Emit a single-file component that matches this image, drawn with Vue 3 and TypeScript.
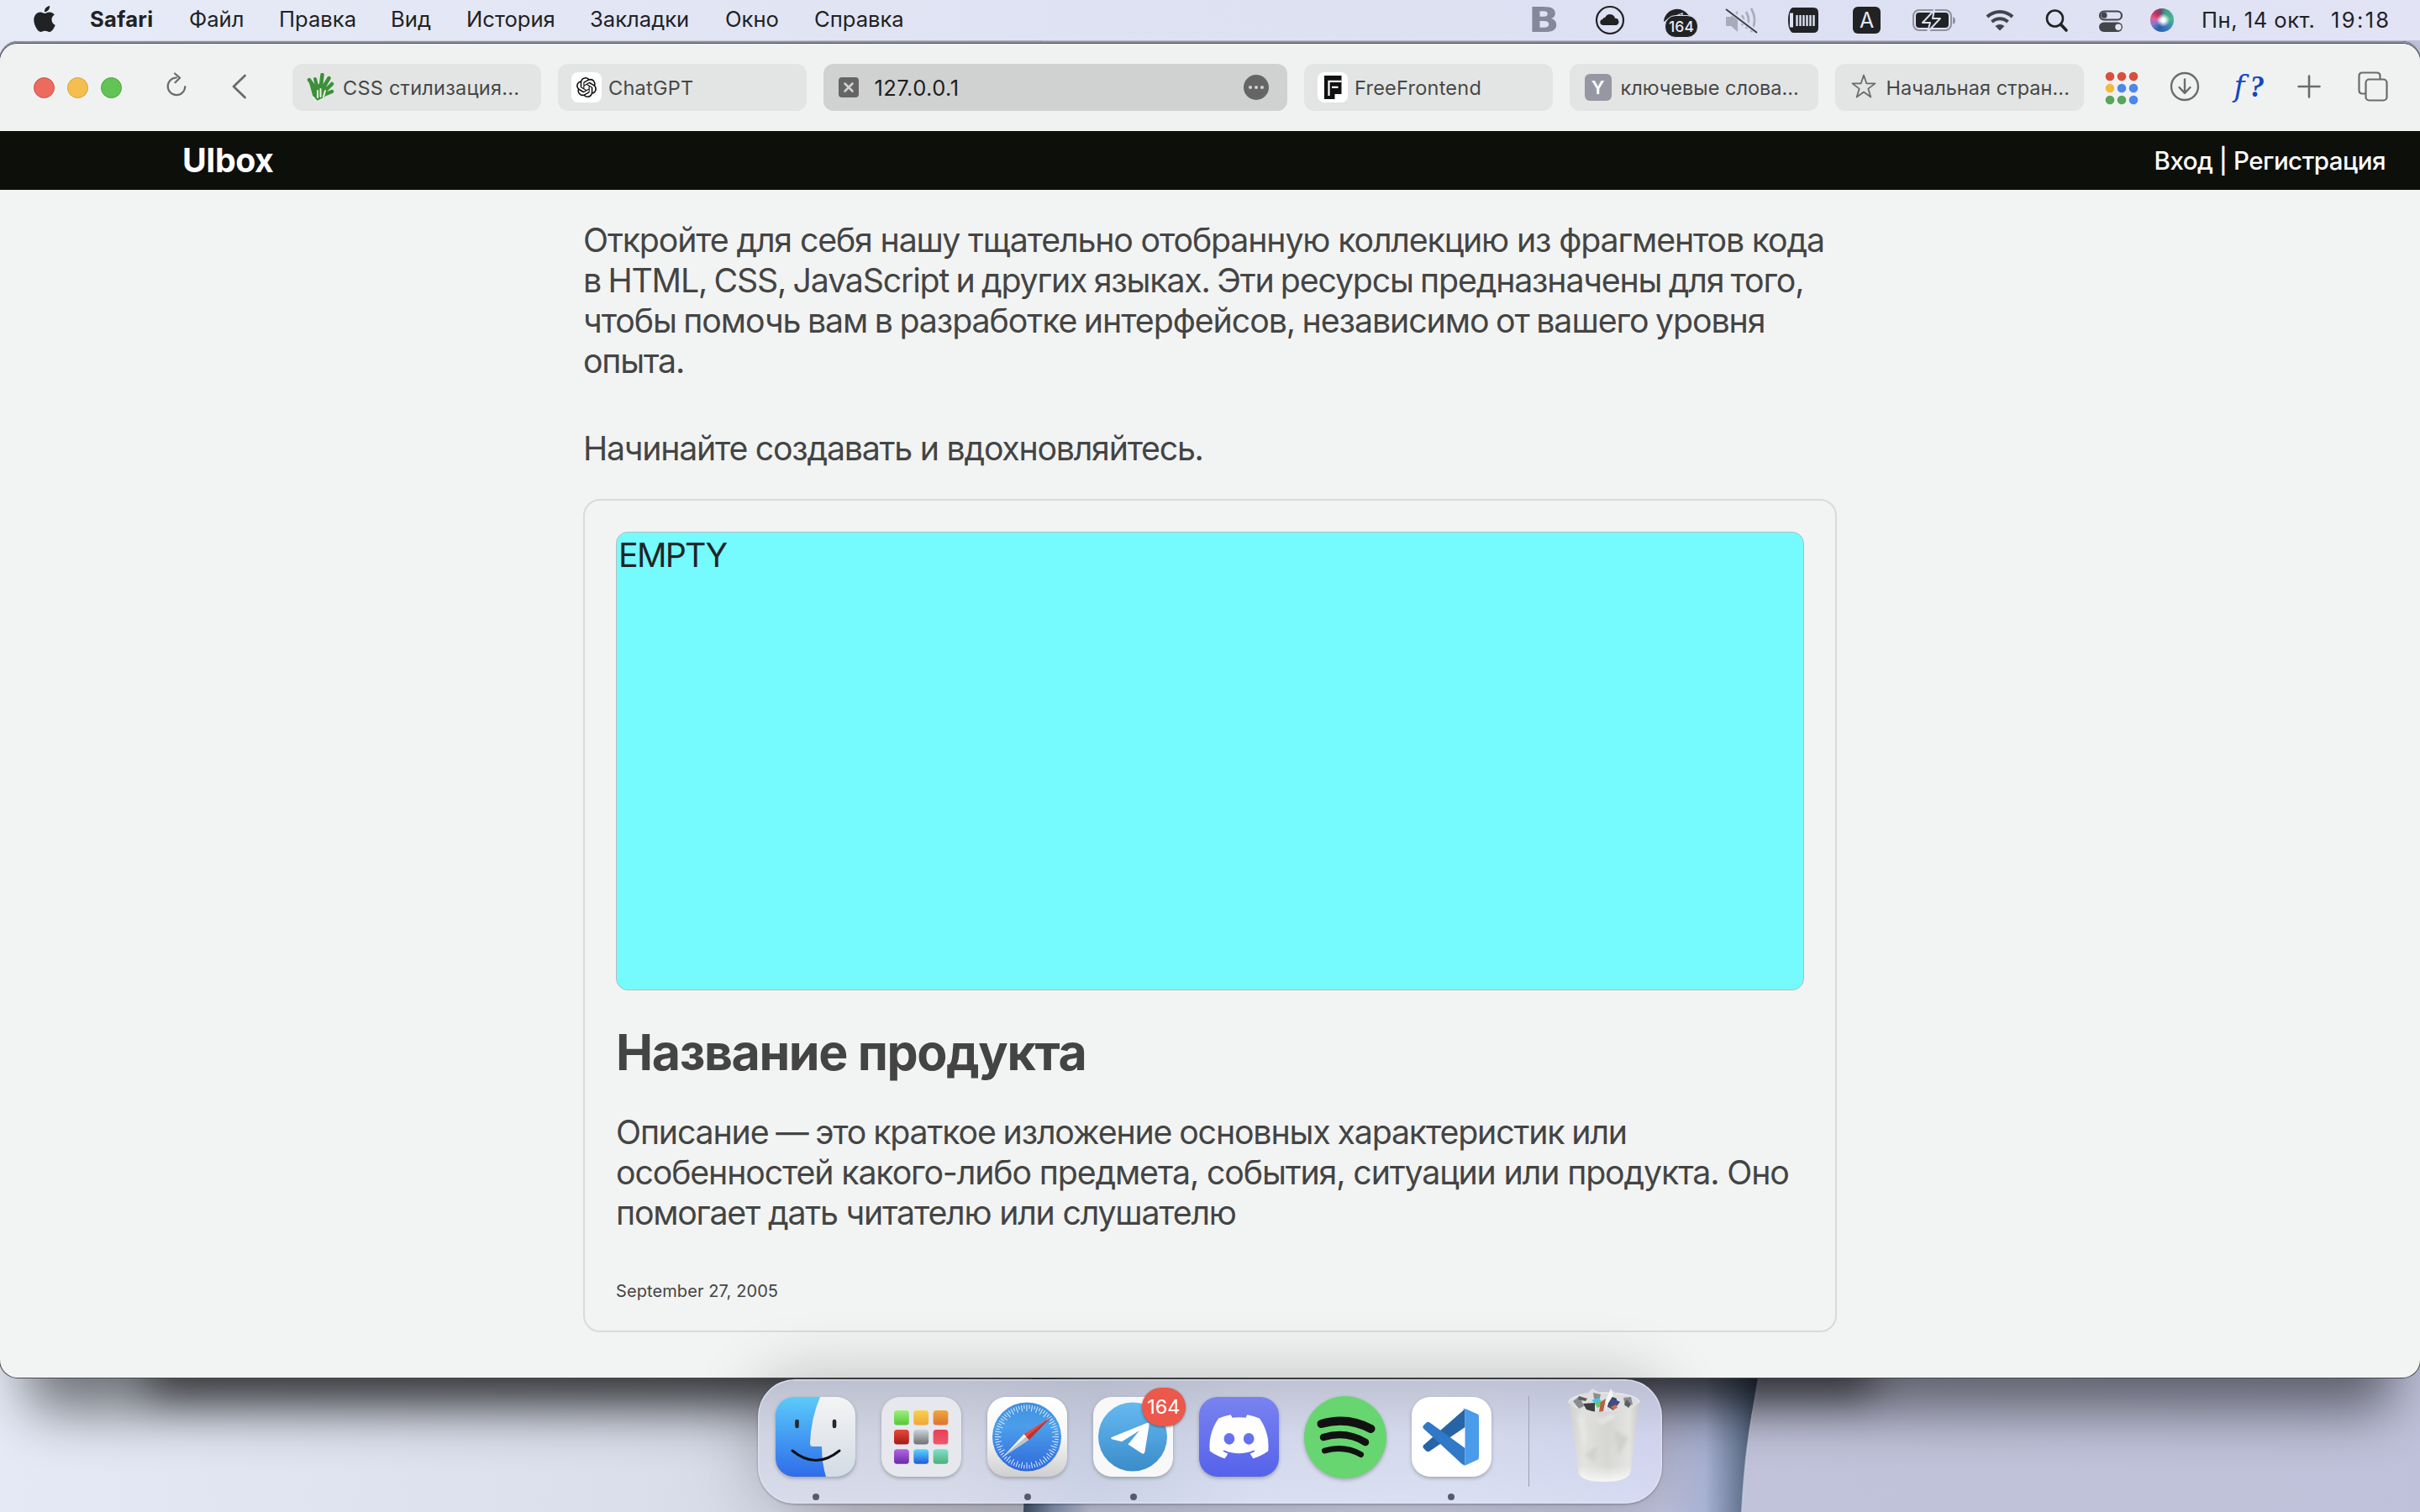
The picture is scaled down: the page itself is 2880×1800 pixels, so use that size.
<script setup lang="ts">
interface Tab {
  icon: 'hand' | 'gpt' | 'active' | 'free' | 'letter' | 'star'
  title: string
}

interface Line {
  text: string
  tracking: number
  word: number
}

const menus: string[] = ['Файл', 'Правка', 'Вид', 'История', 'Закладки', 'Окно', 'Справка']

const tabs: Tab[] = [
  { icon: 'hand', title: 'CSS стилизация...' },
  { icon: 'gpt', title: 'ChatGPT' },
  { icon: 'active', title: '127.0.0.1' },
  { icon: 'free', title: 'FreeFrontend' },
  { icon: 'letter', title: 'ключевые слова...' },
  { icon: 'star', title: 'Начальная стран...' },
]

const intro: Line[] = [
  { text: 'Откройте для себя нашу тщательно отобранную коллекцию из фрагментов кода', tracking: -1.15, word: 0 },
  { text: 'в HTML, CSS, JavaScript и других языках. Эти ресурсы предназначены для того,', tracking: -1.18, word: -1.5 },
  { text: 'чтобы помочь вам в разработке интерфейсов, независимо от вашего уровня', tracking: -1.06, word: -1.5 },
  { text: 'опыта.', tracking: -1.2, word: 0 },
]

const description: Line[] = [
  { text: 'Описание — это краткое изложение основных характеристик или', tracking: -1.16, word: -1 },
  { text: 'особенностей какого-либо предмета, события, ситуации или продукта. Оно', tracking: -1.14, word: 0 },
  { text: 'помогает дать читателю или слушателю', tracking: -1.22, word: 0 },
]

const gridDots: { x: number; y: number; color: string }[] = [
  '#d94f3d', '#d94f3d', '#d94f3d',
  '#f2b93b', '#4f86ec', '#4f86ec',
  '#58a55c', '#58a55c', '#4f86ec',
].map((color, i) => ({ x: 6 + (i % 3) * 14, y: 6 + Math.floor(i / 3) * 14, color }))

const launchpad: { x: number; y: number; from: string; to: string }[] = [
  ['#9cf07a', '#56c838'], ['#f8d24c', '#f0a636'], ['#f0a63c', '#dc7430'],
  ['#e8483a', '#a01c14'], ['#c8d4da', '#707070'], ['#e8405a', '#ec5a68'],
  ['#b464e4', '#6a2ca4'], ['#58d8fc', '#2458dc'], ['#80e0cc', '#4cb078'],
].map(([from, to], i) => ({ x: 15 + (i % 3) * 23.3, y: 16 + Math.floor(i / 3) * 23.1, from, to }))

const ticks: { angle: number; inner: number }[] = Array.from({ length: 72 }, (_, i) => ({
  angle: i * 5,
  inner: i % 2 ? 14 : 17,
}))

const lineStyle = (l: Line) => ({ letterSpacing: `${l.tracking}px`, wordSpacing: `${l.word}px` })
</script>

<template>
  <div class="desktop">
    <svg class="wallpaper" viewBox="0 0 2880 1800" preserveAspectRatio="none" aria-hidden="true">
      <defs>
        <linearGradient id="wpLeft" x1="0" x2="1">
          <stop offset="0" stop-color="#e4e9f5" />
          <stop offset=".6" stop-color="#dbdfec" />
          <stop offset=".74" stop-color="#d5d9e6" />
          <stop offset=".82" stop-color="#c3c3d0" />
          <stop offset="1" stop-color="#b8b9c7" />
        </linearGradient>
        <linearGradient id="wpMid" x1="0" x2="1">
          <stop offset="0" stop-color="#3e4d68" />
          <stop offset=".04" stop-color="#8491af" />
          <stop offset=".09" stop-color="#bcc0d5" />
          <stop offset=".5" stop-color="#c8cce0" />
          <stop offset=".86" stop-color="#bfc1dc" />
          <stop offset=".92" stop-color="#a9b3d4" />
          <stop offset=".97" stop-color="#64748f" />
          <stop offset="1" stop-color="#35455f" />
        </linearGradient>
        <linearGradient id="wpRight" x1="0" x2="1">
          <stop offset="0" stop-color="#c8c8db" />
          <stop offset="1" stop-color="#bfc1da" />
        </linearGradient>
        <filter id="soft" x="-10%" y="-10%" width="120%" height="120%">
          <feGaussianBlur stdDeviation="32" />
        </filter>
        <filter id="softer" x="-10%" y="-10%" width="120%" height="120%">
          <feGaussianBlur stdDeviation="24" />
        </filter>
      </defs>
      <rect width="2880" height="1800" fill="url(#wpRight)" />
      <rect width="1240" height="1800" fill="url(#wpLeft)" />
      <path d="M1232 1600 Q1222 1700 1218 1800 H2073 Q2078 1700 2100 1600 Z" fill="url(#wpMid)" />
      <path d="M2073 1800 Q2078 1700 2096 1640" fill="none" stroke="#c5d0e4" stroke-width="2" opacity=".7" />
      <rect x="30" y="90" width="2820" height="1590" rx="30" fill="#000" opacity=".5" filter="url(#soft)" />
      <rect x="178" y="90" width="2050" height="1572" fill="#000" opacity=".5" filter="url(#softer)" />
    </svg>

    <header class="menubar">
      <svg class="apple" viewBox="2 0 20 24" preserveAspectRatio="none"><path fill="#202224" d="M12.152 6.896c-.948 0-2.415-1.078-3.96-1.04-2.04.027-3.91 1.183-4.961 3.014-2.117 3.675-.546 9.103 1.519 12.09 1.013 1.454 2.208 3.09 3.792 3.039 1.52-.065 2.09-.987 3.935-.987 1.831 0 2.35.987 3.96.948 1.637-.026 2.676-1.48 3.676-2.948 1.156-1.688 1.636-3.325 1.662-3.415-.039-.013-3.182-1.221-3.22-4.857-.026-3.04 2.48-4.494 2.597-4.559-1.429-2.09-3.623-2.324-4.39-2.376-2-.156-3.675 1.09-4.61 1.09zM15.53 3.83c.843-1.012 1.4-2.427 1.245-3.83-1.207.052-2.662.805-3.532 1.818-.78.896-1.454 2.338-1.273 3.714 1.338.104 2.715-.688 3.559-1.701" /></svg>
      <nav class="menus">
        <strong>Safari</strong>
        <span v-for="m in menus" :key="m">{{ m }}</span>
      </nav>
      <div class="status">
        <span class="status-b">B</span>
        <svg width="36" height="40" viewBox="0 0 36 40"><circle cx="18" cy="20" r="16" fill="none" stroke="#202224" stroke-width="2.2" /><path fill="#202224" d="M9.5 26a3.6 3.6 0 0 1-.4-7.100c.8-1.500 2-2.200 3.200-2.200a6.200 6.200 0 0 1 11.700 1.100 4.200 4.200 0 0 1 1.500 8.200z" /></svg>
        <span class="tg-status">
          <svg width="34" height="24" viewBox="0 0 34 24"><path fill="#202224" d="M0 22a16 15.500 0 0 1 31-5c-3-2-18-2-24 0-3 1-5 4-7 5z" /><path d="M14 15l8-3v2" stroke="#dde0f2" stroke-width="1.300" fill="none" /></svg>
          <b>164</b>
        </span>
        <svg width="40" height="40" viewBox="0 0 40 40"><path d="M1 16h6l8-7v25l-8-7H1z" fill="#a9abba" /><path d="M20 14q4 6 0 12M25 10q6 10 0 20M31 6q8 14 0 28" stroke="#a9abba" stroke-width="2.600" fill="none" /><path d="M1 6l37 28" stroke="#dde0f2" stroke-width="5" /><path d="M1 7l37 28" stroke="#3b3d44" stroke-width="2" /></svg>
        <svg width="37" height="40" viewBox="0 0 37 40"><path d="M7 5h24q6 0 6 6v18q0 6-6 6H7q-2 0-3-2-3-4-3-13T4 7q1-2 3-2z" fill="#202224" /><path d="M5 11.500v17" stroke="#dde0f2" stroke-width="4" /><path d="M11.500 14v13M15.500 14v13M19.500 14v13M23.500 14v13M27.500 14v13M31.500 14v13" stroke="#dde0f2" stroke-width="2.400" /></svg>
        <span class="lang">A</span>
        <svg width="54" height="40" viewBox="0 0 54 40"><rect x="2" y="8" width="45" height="24" rx="7" fill="none" stroke="#8f91a0" stroke-width="2" /><rect x="5" y="11" width="39" height="18" rx="4" fill="#202224" /><path d="M49 16q3 1 3 4.500T49 25z" fill="#8f91a0" /><path d="M27 8L13 23h9l-3 11 15-16h-9z" fill="#202224" stroke="#dde0f2" stroke-width="2" stroke-linejoin="round" /></svg>
        <svg width="34" height="40" viewBox="0 0 34 40"><path d="M2 16a21.500 21.500 0 0 1 30 0M7.500 22a14 14 0 0 1 19 0" stroke="#43444c" stroke-width="4" fill="none" /><path d="M11.500 27q5.500-4 11 0L17 32.500z" fill="#43444c" /></svg>
        <svg width="28" height="40" viewBox="0 0 28 40"><circle cx="11.500" cy="18" r="9.500" fill="none" stroke="#202224" stroke-width="2.600" /><path d="M18.500 25l6.500 7" stroke="#202224" stroke-width="3.600" stroke-linecap="round" /></svg>
        <svg width="30" height="40" viewBox="0 0 30 40"><rect x="2" y="9.500" width="26" height="10" rx="5" fill="none" stroke="#43444c" stroke-width="2.200" /><circle cx="7" cy="14.200" r="3.600" fill="#43444c" /><rect x="1" y="22.500" width="28" height="11.500" rx="5.700" fill="#43444c" /><circle cx="24" cy="28.200" r="3.700" fill="#e2e5f4" /></svg>
        <i class="siri"></i>
        <span class="clock"><span class="date">Пн, 14 окт.</span><span class="time">19:18</span></span>
      </div>
    </header>

    <section class="window">
      <div class="toolbar">
        <div class="lights"><i class="red"></i><i class="yellow"></i><i class="green"></i></div>
        <svg class="reload" width="26" height="32" viewBox="0 0 26 32"><path d="M13 6.500a10.300 10.300 0 1 0 10.300 10.500M11 1.500l6 5.200-5.500 5.500" fill="none" stroke="#6a6b6a" stroke-width="2.200" stroke-linecap="round" stroke-linejoin="round" /></svg>
        <svg class="back" width="20" height="32" viewBox="0 0 20 32"><path d="M16.500 3L3 16l13.500 13" fill="none" stroke="#6a6b6a" stroke-width="2.800" stroke-linecap="round" stroke-linejoin="round" /></svg>

        <div class="tabs">
          <div v-for="t in tabs" :key="t.title" class="tab" :class="t.icon">
            <svg v-if="t.icon === 'hand'" class="fav" width="34" height="34" viewBox="0 0 34 34">
              <g stroke="#3d9038" stroke-linecap="round" fill="none">
                <path d="M10 18L3 8" stroke-width="4.500" /><path d="M12 15L10 7" stroke-width="4" /><path d="M17 15l1.500-13" stroke-width="4.500" /><path d="M20 17l6.500-11" stroke-width="4.500" /><path d="M22 21l8-8" stroke-width="4.500" /><path d="M20 26l10-4" stroke-width="4.500" />
              </g>
              <path d="M2 8l6 22 4 3 10-5 4-10-8-6-7 2z" fill="#3d9038" />
              <path d="M13 29v-8M16.500 28v-9M20 28l2-7" stroke="#e8f2e6" stroke-width="2" stroke-linecap="round" />
              <path d="M7 28l5 6" stroke="#e8f2e6" stroke-width="2" />
            </svg>
            <span v-else-if="t.icon === 'gpt'" class="fav tile">
              <svg width="24" height="24" viewBox="0 0 24 24"><path fill="#111" d="M22.2819 9.8211a5.9847 5.9847 0 0 0-.5157-4.9108 6.0462 6.0462 0 0 0-6.5098-2.9A6.0651 6.0651 0 0 0 4.9807 4.1818a5.9847 5.9847 0 0 0-3.9977 2.9 6.0462 6.0462 0 0 0 .7427 7.0966 5.98 5.98 0 0 0 .511 4.9107 6.051 6.051 0 0 0 6.5146 2.9001A5.9847 5.9847 0 0 0 13.2599 24a6.0557 6.0557 0 0 0 5.7718-4.2058 5.9894 5.9894 0 0 0 3.9977-2.9001 6.0557 6.0557 0 0 0-.7475-7.0729zm-9.022 12.6081a4.4755 4.4755 0 0 1-2.8764-1.0408l.1419-.0804 4.7783-2.7582a.7948.7948 0 0 0 .3927-.6813v-6.7369l2.02 1.1686a.071.071 0 0 1 .038.052v5.5826a4.504 4.504 0 0 1-4.4945 4.4944zm-9.6607-4.1254a4.4708 4.4708 0 0 1-.5346-3.0137l.142.0852 4.783 2.7582a.7712.7712 0 0 0 .7806 0l5.8428-3.3685v2.3324a.0804.0804 0 0 1-.0332.0615L9.74 19.9502a4.4992 4.4992 0 0 1-6.1408-1.6464zM2.3408 7.8956a4.485 4.485 0 0 1 2.3655-1.9728V11.6a.7664.7664 0 0 0 .3879.6765l5.8144 3.3543-2.0201 1.1685a.0757.0757 0 0 1-.071 0l-4.8303-2.7865A4.504 4.504 0 0 1 2.3408 7.872zm16.5963 3.8558L13.1038 8.364 15.1192 7.2a.0757.0757 0 0 1 .071 0l4.8303 2.7913a4.4944 4.4944 0 0 1-.6765 8.1042v-5.6772a.79.79 0 0 0-.407-.667zm2.0107-3.0231l-.142-.0852-4.7735-2.7818a.7759.7759 0 0 0-.7854 0L9.409 9.2297V6.8974a.0662.0662 0 0 1 .0284-.0615l4.8303-2.7866a4.4992 4.4992 0 0 1 6.6802 4.66zM8.3065 12.863l-2.02-1.1638a.0804.0804 0 0 1-.038-.0567V6.0742a4.4992 4.4992 0 0 1 7.3757-3.4537l-.142.0805L8.704 5.459a.7948.7948 0 0 0-.3927.6813zm1.0976-2.3654l2.602-1.4998 2.6069 1.4998v2.9994l-2.5974 1.4997-2.6067-1.4997Z" /></svg>
            </span>
            <svg v-else-if="t.icon === 'active'" class="fav" width="24" height="24" viewBox="0 0 24 24"><rect width="24" height="24" rx="4" fill="#646564" /><path d="M7.500 7.500l9 9M16.500 7.500l-9 9" stroke="#d0d2d1" stroke-width="2.600" stroke-linecap="round" /></svg>
            <span v-else-if="t.icon === 'free'" class="fav tile">
              <svg width="36" height="36" viewBox="0 0 36 36"><path d="M8 4H28.500V26H20.500V32H8z" fill="#111" /><path d="M13.500 28V10.800H28.500M17 17.800H24.500" fill="none" stroke="#fff" stroke-width="2.200" /></svg>
            </span>
            <span v-else-if="t.icon === 'letter'" class="fav letter-box">Y</span>
            <svg v-else class="fav" width="30" height="30" viewBox="0 0 30 30"><path d="M15 1.500l3.300 9.800 10.200.1-8.200 6.200 3 10L15 21.600l-8.300 6 3-10-8.200-6.200 10.200-.1z" fill="none" stroke="#6a6b6a" stroke-width="1.800" stroke-linejoin="round" /></svg>
            <span class="tab-title">{{ t.title }}</span>
            <svg v-if="t.icon === 'active'" class="more" width="30" height="30" viewBox="0 0 30 30"><circle cx="15" cy="15" r="15" fill="#646564" /><circle cx="8" cy="15" r="2.100" fill="#d0d2d1" /><circle cx="15" cy="15" r="2.100" fill="#d0d2d1" /><circle cx="22" cy="15" r="2.100" fill="#d0d2d1" /></svg>
          </div>
        </div>

        <div class="actions">
          <svg width="40" height="40" viewBox="0 0 40 40"><circle v-for="(d, i) in gridDots" :key="i" :cx="d.x" :cy="d.y" r="5.300" :fill="d.color" /></svg>
          <svg width="36" height="36" viewBox="0 0 36 36"><circle cx="18" cy="18" r="16" fill="none" stroke="#6a6b6a" stroke-width="2.400" /><path d="M18 9.500v16M11.500 19l6.500 6.800 6.500-6.800" fill="none" stroke="#6a6b6a" stroke-width="2.400" stroke-linecap="round" stroke-linejoin="round" /></svg>
          <span class="fq"><i>f</i><b>?</b></span>
          <svg width="28" height="28" viewBox="0 0 28 28"><path d="M14 1.500v25M1.500 14h25" stroke="#6a6b6a" stroke-width="2.600" stroke-linecap="round" /></svg>
          <svg width="36" height="36" viewBox="0 0 36 36"><path d="M9.500 26.500H5.500q-4 0-4-4v-17q0-4 4-4H22.500q4 0 4 4V9" fill="none" stroke="#6a6b6a" stroke-width="2.200" /><rect x="9.500" y="9.500" width="25" height="25" rx="4" fill="none" stroke="#6a6b6a" stroke-width="2.200" /></svg>
        </div>
      </div>

      <div class="site-header">
        <span class="brand">UIbox</span>
        <span class="auth">Вход | Регистрация</span>
      </div>

      <main class="page">
        <p class="intro"><span v-for="l in intro" :key="l.text" class="line" :style="lineStyle(l)">{{ l.text }}</span></p>
        <p class="intro second">Начинайте создавать и вдохновляйтесь.</p>
        <article class="card">
          <div class="preview">EMPTY</div>
          <h2>Название продукта</h2>
          <p class="desc"><span v-for="l in description" :key="l.text" class="line" :style="lineStyle(l)">{{ l.text }}</span></p>
          <time>September 27, 2005</time>
        </article>
      </main>
    </section>

    <footer class="dock">
      <div class="app running">
        <svg width="95" height="95" viewBox="0 0 95 95">
          <defs>
            <linearGradient id="fBlue" x2="0" y2="1"><stop stop-color="#5ccbf9" /><stop offset=".5" stop-color="#439bf3" /><stop offset="1" stop-color="#306ce9" /></linearGradient>
            <linearGradient id="fWhite" x2="0" y2="1"><stop stop-color="#f4f4f4" /><stop offset="1" stop-color="#d3dbe4" /></linearGradient>
            <clipPath id="sq"><rect width="95" height="95" rx="22" /></clipPath>
          </defs>
          <g clip-path="url(#sq)">
            <rect width="95" height="95" fill="url(#fBlue)" />
            <path d="M53 0Q42 26 41 55q0 4 3 4h11q0 20 5 36h35V0z" fill="url(#fWhite)" />
          </g>
          <path d="M25.500 29v6M70 29v6" stroke="#23282c" stroke-width="4.600" stroke-linecap="round" />
          <path d="M20 64q28 23 56 0" fill="none" stroke="#111" stroke-width="3" stroke-linecap="round" />
        </svg>
      </div>
      <div class="app">
        <svg width="95" height="95" viewBox="0 0 95 95">
          <defs><linearGradient v-for="(c, i) in launchpad" :id="'lp' + i" :key="i" x2="0" y2="1"><stop :stop-color="c.from" /><stop offset="1" :stop-color="c.to" /></linearGradient></defs>
          <rect width="95" height="95" rx="22" fill="#e7e8ee" />
          <rect v-for="(c, i) in launchpad" :key="i" :x="c.x" :y="c.y" width="17.800" height="17.500" rx="3.500" :fill="`url(#lp${i})`" />
        </svg>
      </div>
      <div class="app running">
        <svg width="95" height="95" viewBox="0 0 95 95">
          <defs>
            <linearGradient id="sfBg" x2="0" y2="1"><stop stop-color="#fff" /><stop offset=".5" stop-color="#f7f7f7" /><stop offset="1" stop-color="#cfcfcf" /></linearGradient>
            <linearGradient id="sfBlue" x2="0" y2="1"><stop stop-color="#3f8fde" /><stop offset=".35" stop-color="#4b9fea" /><stop offset="1" stop-color="#3068dc" /></linearGradient>
          </defs>
          <rect width="95" height="95" rx="22" fill="url(#sfBg)" />
          <circle cx="47" cy="47.500" r="41" fill="url(#sfBlue)" />
          <path v-for="t in ticks" :key="t.angle" :d="`M47 9.500V${t.inner}`" :transform="`rotate(${t.angle} 47 47.500)`" stroke="#cfe4fb" stroke-width="1.100" />
          <path d="M43.600 44.300L76 24 49.500 51.300z" fill="#e8493f" /><path d="M46.500 47.500L76 24 49.500 51.300z" fill="#b8352e" />
          <path d="M43.600 44.300L18 72l28.500-24.500z" fill="#f5f5f5" /><path d="M49.500 51.300L18 72l28.500-24.500z" fill="#c4c4c4" />
        </svg>
      </div>
      <div class="app running">
        <svg width="95" height="95" viewBox="0 0 95 95">
          <defs><linearGradient id="tgBlue" x2="0" y2="1"><stop stop-color="#65b9f0" /><stop offset="1" stop-color="#3b8cca" /></linearGradient></defs>
          <rect width="95" height="95" rx="22" fill="#f8f8f8" />
          <circle cx="47" cy="47.500" r="41" fill="url(#tgBlue)" />
          <path d="M22 48L64 31q3-1 2.500 3L61.500 65q-.5 4-4 2L41.500 56.500 55 40 34 53.300 23 50.500q-3-1-1-2.500z" fill="#fff" />
        </svg>
        <span class="badge">164</span>
      </div>
      <div class="app">
        <svg width="95" height="95" viewBox="0 0 95 95">
          <defs><linearGradient id="dcBg" x2="0" y2="1"><stop stop-color="#7983f0" /><stop offset="1" stop-color="#5562ea" /></linearGradient></defs>
          <rect width="95" height="95" rx="22" fill="url(#dcBg)" />
          <path transform="translate(12.500 13) scale(2.920 2.850)" fill="#fff" d="M20.317 4.3698a19.7913 19.7913 0 00-4.8851-1.5152.0741.0741 0 00-.0785.0371c-.211.3753-.4447.8648-.6083 1.2495-1.8447-.2762-3.68-.2762-5.4868 0-.1636-.3933-.4058-.8742-.6177-1.2495a.077.077 0 00-.0785-.037 19.7363 19.7363 0 00-4.8852 1.515.0699.0699 0 00-.0321.0277C.5334 9.0458-.319 13.5799.0992 18.0578a.0824.0824 0 00.0312.0561c2.0528 1.5076 4.0413 2.4228 5.9929 3.0294a.0777.0777 0 00.0842-.0276c.4616-.6304.8731-1.2952 1.226-1.9942a.076.076 0 00-.0416-.1057c-.6528-.2476-1.2743-.5495-1.8722-.8923a.077.077 0 01-.0076-.1277c.1258-.0943.2517-.1923.3718-.2914a.0743.0743 0 01.0776-.0105c3.9278 1.7933 8.18 1.7933 12.0614 0a.0739.0739 0 01.0785.0095c.1202.099.246.1981.3728.2924a.077.077 0 01-.0066.1276 12.2986 12.2986 0 01-1.873.8914.0766.0766 0 00-.0407.1067c.3604.698.7719 1.3628 1.225 1.9932a.076.076 0 00.0842.0286c1.961-.6067 3.9495-1.5219 6.0023-3.0294a.077.077 0 00.0313-.0552c.5004-5.177-.8382-9.6739-3.5485-13.6604a.061.061 0 00-.0312-.0286zM8.02 15.3312c-1.1825 0-2.1569-1.0857-2.1569-2.419 0-1.3332.9555-2.4189 2.157-2.4189 1.2108 0 2.1757 1.0952 2.1568 2.419 0 1.3332-.9555 2.4189-2.1569 2.4189zm7.9748 0c-1.1825 0-2.1569-1.0857-2.1569-2.419 0-1.3332.9554-2.4189 2.1569-2.4189 1.2108 0 2.1757 1.0952 2.1568 2.419 0 1.3332-.946 2.4189-2.1568 2.4189Z" />
        </svg>
      </div>
      <div class="app">
        <svg class="round" width="98" height="98" viewBox="0 0 98 98">
          <circle cx="49" cy="49" r="49" fill="#67d670" />
          <g fill="none" stroke="#111" stroke-linecap="round">
            <path d="M20.500 33q31-9 59 6" stroke-width="10" /><path d="M23 49q27-8 50 6" stroke-width="8.500" /><path d="M24.500 65q23-6.500 43 4.500" stroke-width="7" />
          </g>
        </svg>
      </div>
      <div class="app running">
        <svg width="95" height="95" viewBox="0 0 95 95">
          <rect width="95" height="95" rx="22" fill="#fff" />
          <path d="M63.500 14.300L14 57.500q-1.500 2 0 3.500l3.500 3.500q2 1.500 4 0L63.500 36z" fill="#2664a5" />
          <path d="M21.500 30.500q-2-1.500-4 0L14 34q-1.500 2 0 3.500L60 80q2 1.500 3.500 1V61z" fill="#3078c8" />
          <path d="M61 15q1-1.500 4-.5l13.500 6Q80 21.300 80 23v49.500q0 1.500-1.500 2.200L65 81q-2.500 1-4-.5 2.500.5 2.500-3V18q0-3-2.500-3z" fill="#4a9bea" />
        </svg>
      </div>
      <div class="divider"></div>
      <svg class="trash" width="86" height="112" viewBox="0 0 86 112">
        <defs>
          <linearGradient id="can" x2="1" y2="0"><stop stop-color="#cfcfcf" /><stop offset=".2" stop-color="#e0e0de" /><stop offset=".55" stop-color="#d3d3d0" /><stop offset=".85" stop-color="#e2e2e0" /><stop offset="1" stop-color="#c9c9c9" /></linearGradient>
          <linearGradient id="canBase" x2="0" y2="1"><stop stop-color="#fff" stop-opacity="0" /><stop offset=".8" stop-color="#fff" stop-opacity=".1" /><stop offset="1" stop-color="#fff" stop-opacity=".8" /></linearGradient>
          <filter id="blurCan"><feGaussianBlur stdDeviation="2" /></filter>
        </defs>
        <ellipse cx="43" cy="15" rx="42" ry="11" fill="#dcdce0" stroke="#f6f6f8" />
        <path d="M10 16L12 6l12-2 5-5 11 6 4 8 8-12 12 8 10 2 4 11-12 8H18z" fill="#dedede" />
        <path d="M6 14l8-6 5 12-6 3zM30 4l9 2-2 8-6-3zM66 10l9-1 2 9-9 2z" fill="#8b8c8f" />
        <path d="M13 8l10 3-2 3-9-2zM70 12l5 6-3 4-5-4z" fill="#5c5d61" />
        <path d="M18 17l14-1 0 11-10-3zM50 8l8 3-2 12-9-2z" fill="#403d42" />
        <path d="M28 13l8-3 4 4-6 4z" fill="#45c4e8" /><path d="M32 17l7-3 1 6-5 2z" fill="#69c56a" /><path d="M39 15l6-4-3 15-5 1z" fill="#b9603f" /><path d="M52 10l10 5-8 10-6-4z" fill="#3c4c8c" /><path d="M51 21l6-3 2 4-5 2z" fill="#dc6c36" />
        <path d="M45 13l6-14 3 8-7 11-2 8z" fill="#f6f6f6" />
        <path d="M1 15q8 12 42 12t42-12L75 96q-1 14-32 14T12 96z" fill="url(#can)" />
        <g filter="url(#blurCan)">
          <path d="M28 29l12 13 20-12-10 0-12 6zM12 32l7 36 3-10-4-26z" fill="#e6e6e4" />
          <path d="M54 48l18 10-12 22zM20 78l16-12-4 22z" fill="#cdcdc9" />
        </g>
        <path d="M1 15q8 12 42 12t42-12L75 96q-1 14-32 14T12 96z" fill="url(#canBase)" />
      </svg>
    </footer>
  </div>
</template>

<style>
body {
  margin: 0;
  overflow: hidden;
}
</style>

<style scoped>
.desktop {
  position: relative;
  width: 2880px;
  height: 1800px;
  display: flex;
  flex-direction: column;
  overflow: hidden;
  font-family: Inter, 'Noto Sans', sans-serif;
  -webkit-font-smoothing: antialiased;
}
svg {
  display: block;
  flex: none;
}
.wallpaper {
  position: absolute;
  inset: 0;
  width: 100%;
  height: 100%;
}
.menubar {
  position: relative;
  height: 48px;
  flex: none;
  display: flex;
  align-items: center;
  background: linear-gradient(90deg, #e7ebf7, #dfe2f2 45%, #dde0f2 75%, #e2e4f5);
  color: #202224;
  font-size: 25.6px;
}
.apple {
  width: 26px;
  height: 31px;
  margin: -4px 0 0 40px;
}
.menus {
  margin-left: 41px;
  display: grid;
  grid-template-columns: 118px 107px 133px 90px 147px 161px 106px 120px;
  white-space: nowrap;
  line-height: 48px;
  margin-top: -2px;
}
.menus strong {
  font-weight: 700;
  letter-spacing: .3px;
}
.status {
  margin-left: auto;
  width: 1058px;
  display: grid;
  grid-template-columns: 76px 82px 73px 74px 78px 70px 88px 71px 63px 62px 61px 1fr;
  align-items: center;
}
.status svg {
  margin-top: 0;
}
.status-b {
  width: 31px;
  font: 700 40px/48px 'DejaVu Sans', sans-serif;
  color: #85889a;
  margin-left: -3px;
  transform: scaleX(1.2);
  transform-origin: left;
}
.tg-status {
  position: relative;
  height: 40px;
}
.tg-status b {
  position: absolute;
  left: 1px;
  top: 14px;
  width: 40px;
  height: 27px;
  border-radius: 13px;
  border: 1px solid #dde0f2;
  box-sizing: border-box;
  background: #202224;
  color: #e9ebf6;
  font-size: 17.500px;
  font-weight: 500;
  line-height: 25px;
  text-align: center;
}
.lang {
  width: 33px;
  height: 32px;
  border-radius: 6px;
  background: #202224;
  color: #e4e7f6;
  text-align: center;
  font-size: 25px;
  line-height: 32px;
}
.siri {
  width: 28px;
  height: 28px;
  border-radius: 50%;
  background:
    radial-gradient(circle at 55% 50%, #fff 0 10%, rgba(255, 255, 255, 0) 38%),
    conic-gradient(from 20deg, #3f9c86, #4ab494, #3a78c0 35%, #2860a8 50%, #7a78d0 62%, #e060a0 72%, #c83060 82%, #6a4a70 92%, #3f9c86);
}
.clock {
  display: flex;
  justify-content: space-between;
  width: 225.500px;
  white-space: nowrap;
  margin-top: -2px;
}
.date { letter-spacing: .5px; }
.time { letter-spacing: 2.300px; }
.window {
  position: relative;
  flex: none;
  height: 1588px;
  margin-top: 4px;
  border-radius: 21px;
  background: #f2f4f3;
  box-shadow: 0 0 0 1px #4b4b4e, 0 -2px 0 1px #8f92a0, 0 -3px 0 0 #1b1d22;
  overflow: hidden;
}
.toolbar {
  height: 104px;
  display: flex;
  align-items: center;
  background: #f0f2f1;
}
.lights {
  display: flex;
  gap: 15px;
  margin-left: 39.500px;
}
.lights i {
  width: 25px;
  height: 25px;
  box-sizing: border-box;
  border-radius: 50%;
  border: 1px solid;
}
.red { background: #ed6a5e; border-color: #d15045 !important; }
.yellow { background: #f5bf4f; border-color: #d6a038 !important; }
.green { background: #61c454; border-color: #4ca43c !important; }
.reload {
  margin: -4px 0 0 52px;
}
.back {
  margin: -2px 0 0 52px;
}
.tabs {
  margin-left: 53px;
  width: 2132px;
  display: flex;
  gap: 20px;
}
.tab {
  width: 296px;
  height: 56px;
  box-sizing: border-box;
  padding-left: 16px;
  display: flex;
  align-items: center;
  border-radius: 12px;
  background: #e3e5e4;
  color: #464847;
  font-size: 23.500px;
  white-space: nowrap;
}
.fav {
  flex: none;
}
.hand { padding-left: 17px; }
.hand .tab-title { margin-left: 9.500px; letter-spacing: .25px; }
.tile {
  width: 36px;
  height: 36px;
  border-radius: 8px;
  background: #fff;
  display: flex;
  align-items: center;
  justify-content: center;
}
.gpt .tab-title, .free .tab-title { margin-left: 8.500px; letter-spacing: .25px; }
.tab.active {
  width: 552px;
  padding-left: 18px;
  padding-right: 22px;
  background: #d0d2d1;
  color: #1d1f1e;
  font-size: 25.500px;
}
.active .tab-title { margin: 1px 0 0 19px; letter-spacing: .45px; }
.more { margin-left: auto; }
.active .more { margin-top: -1px; }
.letter { padding-left: 18px; }
.letter .tab-title { margin-left: 11px; }
.letter-box {
  width: 32px;
  height: 32px;
  border-radius: 6px;
  background: #9797a3;
  color: #fff;
  font-size: 22px;
  font-weight: 600;
  line-height: 33px;
  text-align: center;
}
.star { padding-left: 19px; }
.star .fav { margin-top: -3px; }
.star .tab-title { margin-left: 12px; letter-spacing: .05px; }
.actions {
  margin-left: 25px;
  width: 337px;
  display: grid;
  grid-template-columns: 77px 75px 77px 72px 36px;
  align-items: center;
}
.actions svg { margin-top: -2px; }
.actions svg:first-child { margin-top: 2px; }
.fq {
  color: #1446c0;
  font-family: 'DejaVu Serif', serif;
  line-height: 36px;
  white-space: nowrap;
  display: flex;
}
.fq i {
  font-size: 35px;
  width: 19px;
  margin-left: 2px;
}
.fq b {
  font: italic 700 35px/38px 'Liberation Serif', serif;
}
.site-header {
  height: 70px;
  display: flex;
  justify-content: space-between;
  align-items: center;
  padding: 0 41px 2px 217px;
  box-sizing: border-box;
  background: #0d0f0a;
  color: #fff;
}
.brand {
  font-size: 39.300px;
  font-weight: 700;
  letter-spacing: -.45px;
}
.auth {
  margin-top: 2px;
  font-size: 29.500px;
  font-weight: 500;
  letter-spacing: -.5px;
}
.page {
  width: 1492px;
  margin: 0 auto;
  padding-top: 36px;
  color: #444;
}
.intro, .desc {
  margin: 0;
  font-size: 39.300px;
  line-height: 48px;
  letter-spacing: -1.250px;
  white-space: nowrap;
}
.line {
  display: block;
}
.intro.second {
  margin-top: 56px;
}
.card {
  margin-top: 36px;
  box-sizing: border-box;
  height: 992px;
  border: 2px solid #d9dbda;
  border-radius: 20px;
  padding: 37px;
}
.preview {
  box-sizing: border-box;
  height: 546px;
  border: 1px solid #b5bcbc;
  border-radius: 14px;
  background: #75fbfd;
  padding: 3px 2px;
  color: #212529;
  font-size: 39.300px;
  line-height: 48px;
  letter-spacing: -1.700px;
}
h2 {
  margin: 38px 0 0;
  font-size: 59px;
  font-weight: 700;
  line-height: 72px;
  letter-spacing: -1.350px;
}
.desc {
  margin-top: 35px;
}
time {
  display: block;
  margin-top: 57px;
  font-size: 20px;
  line-height: 24px;
  letter-spacing: .1px;
}
.dock {
  position: relative;
  box-sizing: border-box;
  width: 1076px;
  height: 148px;
  margin: 2px auto 0;
  padding: 0 26px 0 21px;
  display: flex;
  align-items: flex-start;
  border-radius: 44px;
  background:
    linear-gradient(180deg, rgba(178, 182, 196, .65), rgba(205, 210, 225, .3) 45%, rgba(225, 231, 247, .4)),
    linear-gradient(90deg, #d2d4e2, #d0d3e2 22%, #c0c7de 38%, #d4d9ee 55%, #d6dbf0 75%, #cfd2f0);
  box-shadow: 0 0 80px rgba(0, 0, 0, .24), inset 0 0 0 1.500px rgba(225, 230, 245, .7), 0 1px 3px rgba(0, 0, 0, .3);
}
.app {
  position: relative;
  width: 95px;
  margin-right: 31.100px;
  padding-top: 21px;
  display: flex;
  flex-direction: column;
  align-items: center;
}
.app svg {
  filter: drop-shadow(0 2px 2px rgba(0, 0, 0, .25));
}
.app .round {
  margin-top: -1.500px;
}
.running::after {
  content: '';
  width: 8px;
  height: 8px;
  margin-top: 20px;
  border-radius: 50%;
  background: #565a6c;
}
.badge {
  position: absolute;
  left: 57.500px;
  top: 10px;
  width: 52px;
  height: 46px;
  border-radius: 24px;
  background: #ec584b;
  box-shadow: 0 1px 3px rgba(0, 0, 0, .4);
  color: #fff;
  font-size: 23.500px;
  line-height: 46px;
  text-align: center;
}
.divider {
  width: 2px;
  height: 108px;
  margin: 20px 46px 0 13px;
  background: #9ca0b2;
}
.trash {
  margin-top: 12px;
  overflow: visible;
}
</style>
